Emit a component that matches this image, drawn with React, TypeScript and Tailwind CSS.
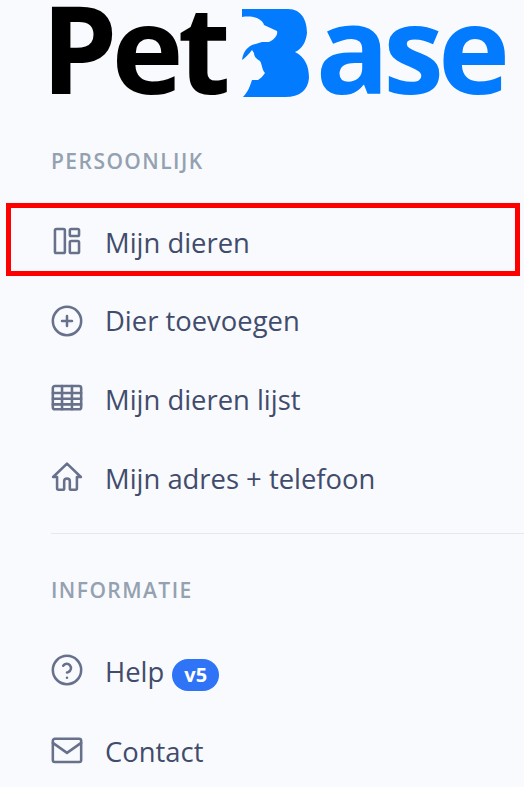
import React from "react";

const font = { fontFamily: '"Open Sans", "Noto Sans", sans-serif' };

function Icon({ children, className = "" }: { children: React.ReactNode; className?: string }) {
  return (
    <svg viewBox="0 0 24 24" fill="none" stroke="#67718c" strokeWidth="1.8" strokeLinecap="round" strokeLinejoin="round" className={`w-[34px] h-[34px] shrink-0 ${className}`}>
      {children}
    </svg>
  );
}

const LayoutIcon = () => (
  <Icon className="mt-[2px]">
    <rect x="3.500" y="3.500" width="7" height="17" rx="1" />
    <rect x="14" y="3.500" width="6.500" height="5" rx="1" />
    <rect x="14" y="12" width="6.500" height="8.500" rx="1" />
  </Icon>
);
const PlusIcon = () => (
  <Icon>
    <circle cx="12" cy="12" r="10" />
    <path d="M12 8.500v7M8.500 12h7" />
  </Icon>
);
const TableIcon = () => (
  <Icon className="mt-[-3px]">
    <rect x="2" y="3.500" width="20" height="16.500" rx="1.500" />
    <path d="M2 8.500h20M2 12.500h20M2 16.500h20M8.500 3.500V20M15.500 3.500V20" />
  </Icon>
);
const HomeIcon = () => (
  <Icon className="mt-[-4px]">
    <path d="M5 12H2.200L12 2.500 21.800 12H19v8a1 1 0 0 1-1 1h-3.500a.5.5 0 0 1-.5-.5V15a2 2 0 0 0-4 0v5.500a.5.5 0 0 1-.5.5H6a1 1 0 0 1-1-1z" />
  </Icon>
);
const HelpIcon = () => (
  <Icon className="mt-[-6px]">
    <circle cx="12" cy="12" r="10" />
    <path d="M12 17.500v.01M12 13.800a2 2 0 0 0 1-.400 3 3 0 1 0-3.700-4.400" />
  </Icon>
);
const MailIcon = () => (
  <Icon className="mt-[-4px]">
    <rect x="2" y="4" width="20" height="16.500" rx="1.500" />
    <path d="M2 7l10 7 10-7" />
  </Icon>
);

function Item({ icon, label, labelClass = "", children }: { icon: React.ReactNode; label: string; labelClass?: string; children?: React.ReactNode }) {
  return (
    <div className="h-[79px] pl-[50px] flex items-center gap-[21px]">
      {icon}
      <span className={`text-[27.4px] leading-none text-[#414c6c] ${labelClass}`}>{label}</span>
      {children}
    </div>
  );
}

function Heading({ children }: { children: React.ReactNode }) {
  return <div className="pl-[51px] text-[21px] font-semibold leading-none tracking-[1.45px] text-[#94a1b0]">{children}</div>;
}

export default function App() {
  return (
    <div className="w-[524px] h-[787px] overflow-hidden bg-[#f9fafd]" style={font}>
      <div className="h-[151px] pl-[41px] flex items-start text-[122px] font-bold leading-[94px] tracking-[-6px]">
        <span className="text-black">Pet</span>
        <svg viewBox="0 0 70 90" className="w-[70px] h-[90px] ml-[15px] mt-[8px] shrink-0">
          <path
            fill="#027bff"
            d="M2 1 L48 1 C62 1 67 13 67 25 C66 34 62 41 55 44 C65 49 69 58 69 70 C68 82 60 89 45 89 L3 89 C8 84 10 78 12 72 L18 72 C21 70 23 68 25 65 C22 62 22 56 20 53 C16 51 14 48 14 45 L12 42 C9 46 5 50 2 52 C3 45 6 40 12 37 L22 34 L29 34 C35 31 38 27 37 23 L24 17 C23 12 15 7 2 9 Z"
          />
        </svg>
        <span className="text-[#027bff] ml-[6px]">ase</span>
      </div>
      <Heading>PERSOONLIJK</Heading>
      <div className="h-[73px] mt-[31px] mb-[5px] ml-[6px] mr-[4px] border-[5px] border-[#fe0000] pl-[39px] flex items-center gap-[21px]">
        <LayoutIcon />
        <span className="text-[27.4px] leading-none mt-[6px] text-[#414c6c]">Mijn dieren</span>
      </div>
      <Item icon={<PlusIcon />} label="Dier toevoegen" />
      <Item icon={<TableIcon />} label="Mijn dieren lijst" />
      <Item icon={<HomeIcon />} label="Mijn adres + telefoon" />
      <div className="ml-[51px] mt-[15px] border-t border-[#e6e8ec]" />
      <div className="mt-[46px]">
        <Heading>INFORMATIE</Heading>
      </div>
      <div className="mt-[32px]">
        <Item icon={<HelpIcon />} label="Help" labelClass="mt-[-2px]">
          <span className="ml-[-13px] mt-[4px] h-[32px] px-[12px] rounded-full bg-[#2f74f6] text-white text-[20px] font-bold leading-[32px]">v5</span>
        </Item>
        <Item icon={<MailIcon />} label="Contact" />
      </div>
    </div>
  );
}
